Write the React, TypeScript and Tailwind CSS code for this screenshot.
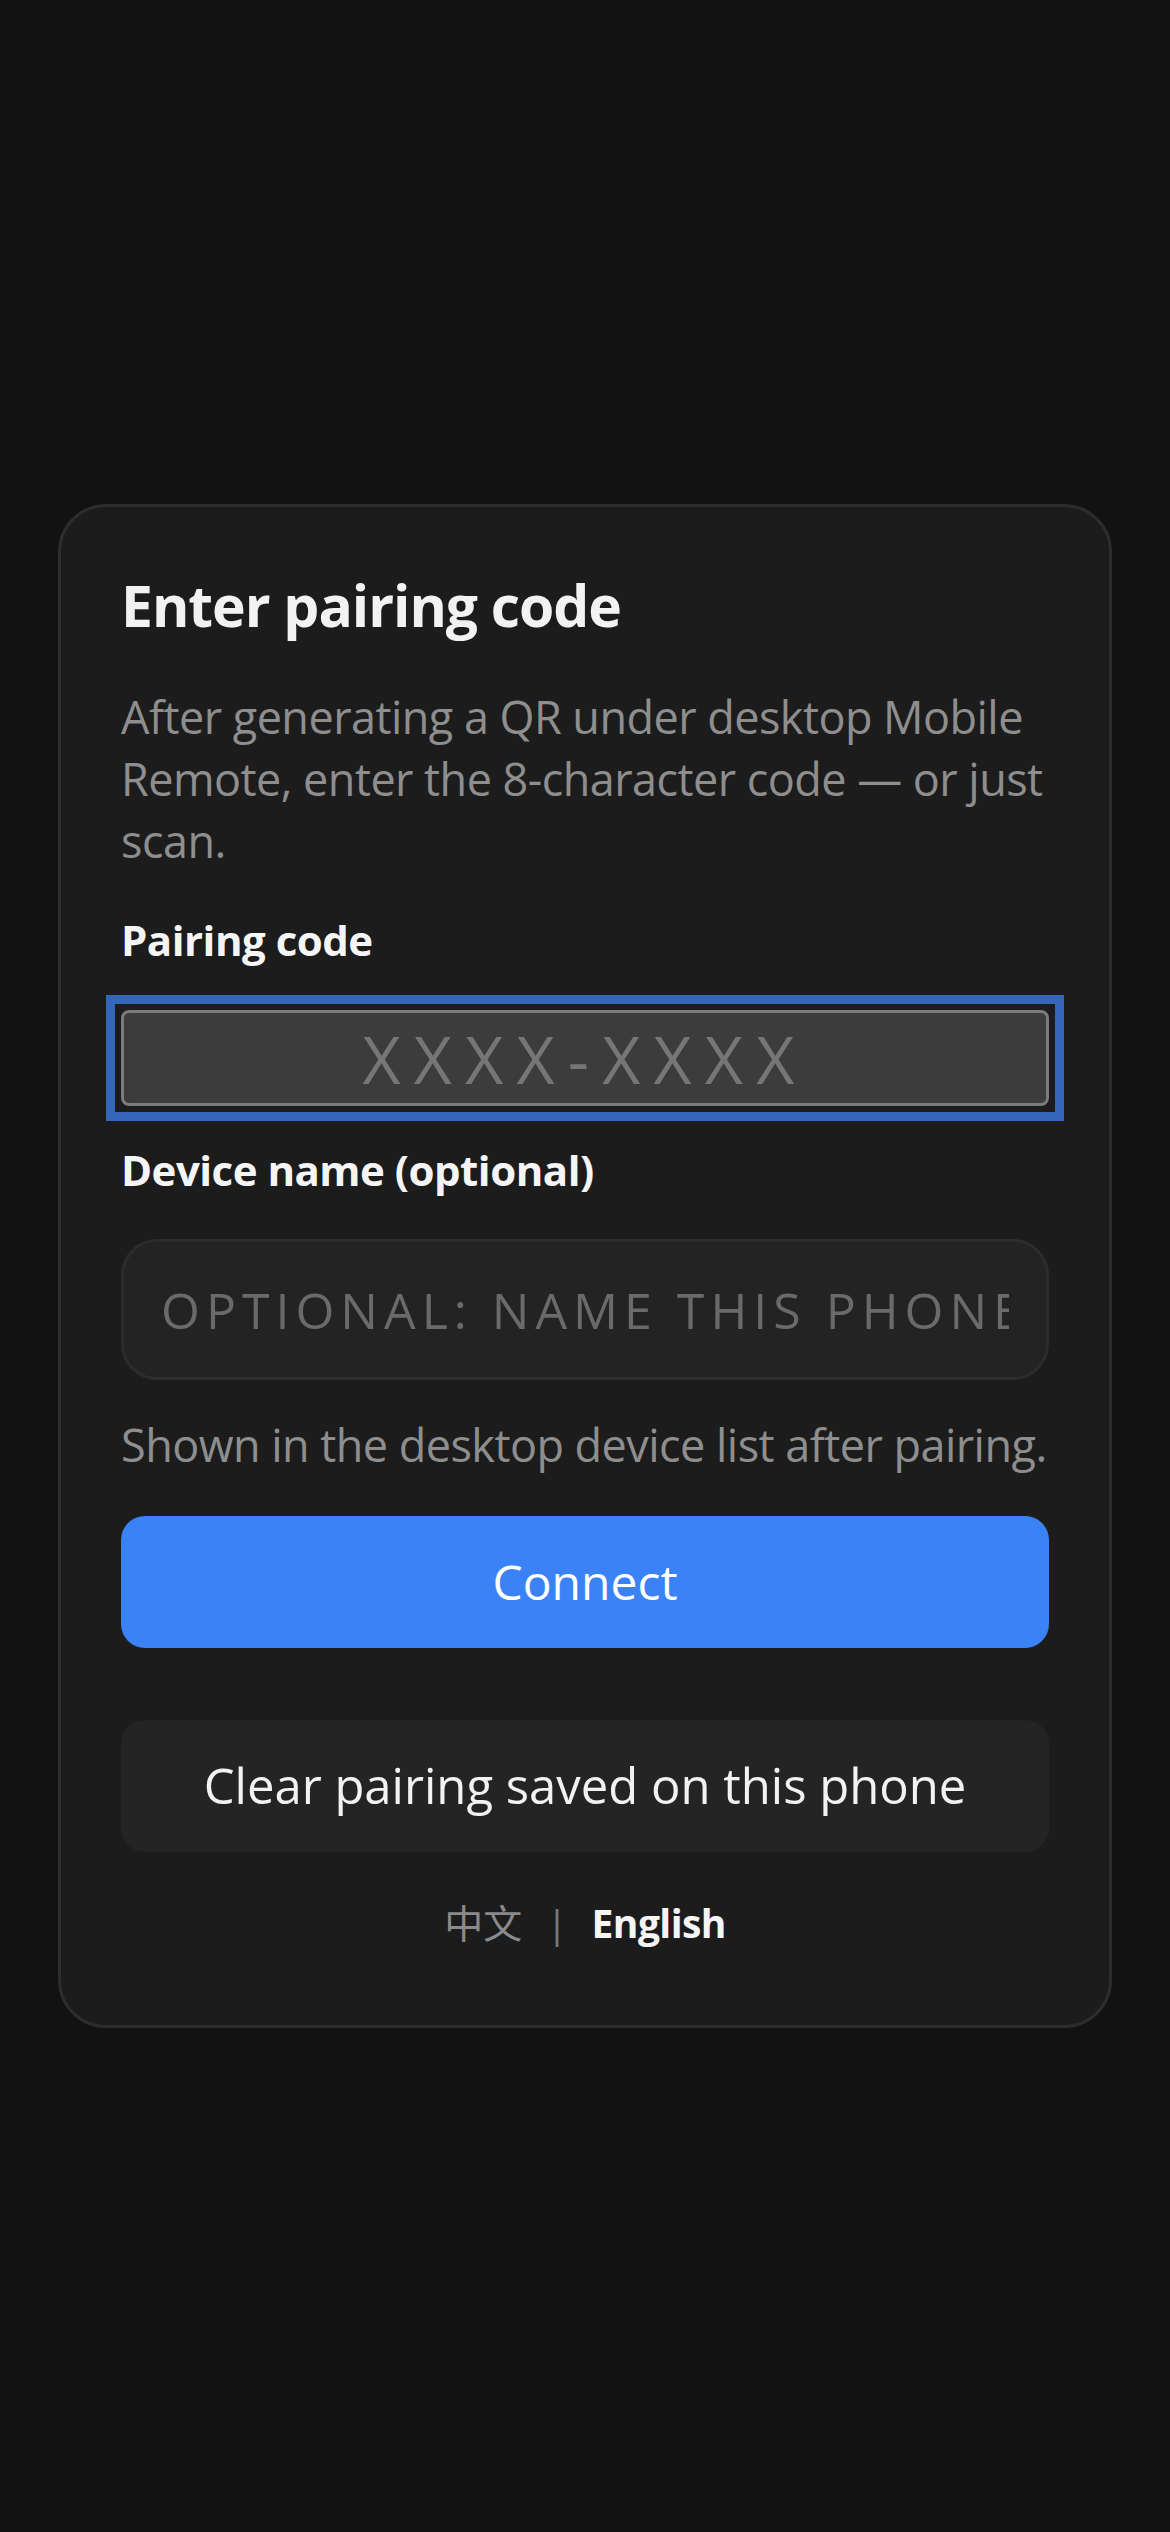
import { useState } from "react"

export default function App() {
  const [code, setCode] = useState("")
  const [name, setName] = useState("")

  return (
    <div
      className="flex min-h-screen items-center bg-[#121212] px-[58px]"
      style={{ fontFamily: '"Open Sans", "Noto Sans CJK SC", sans-serif' }}
    >
      <div className="w-full rounded-[48px] border-[3px] border-[#2d2d2d] bg-[#1c1c1c] px-[60px] pt-[63px] pb-[73px]">
        <h1 className="text-[57px] leading-[71px] font-bold tracking-[-0.018em] text-[#f2f2f2]">Enter pairing code</h1>
        <p className="mt-[45px] text-[45px] leading-[62px] tracking-[-0.012em] text-[#8e8e8e]">
          After generating a QR under desktop Mobile Remote, enter the 8-character code — or just scan.
        </p>

        <label className="mt-[39px] block text-[42px] leading-[58px] font-bold tracking-[-0.012em] text-[#f5f5f5]">
          Pairing code
        </label>
        {/* focus ring: square-cornered, drawn outside the field */}
        <div className="-mx-[15px] mt-[26px] border-[9px] border-[#3466ba] p-[6px]">
          <input
            value={code}
            onChange={(e) => setCode(e.target.value)}
            placeholder="XXXX-XXXX"
            className="block h-[96px] w-full rounded-[8px] border-[3px] border-[#7b7b7b] bg-[#3c3c3c] text-center text-[66px] tracking-[0.2em] text-[#eeeeee] outline-none placeholder:text-[#767676]"
          />
        </div>

        <label className="mt-[20px] block text-[42px] leading-[58px] font-bold tracking-[-0.012em] text-[#f5f5f5]">
          Device name (optional)
        </label>
        <input
          value={name}
          onChange={(e) => setName(e.target.value)}
          placeholder="Optional: name this phone"
          className="mt-[40px] block h-[141px] w-full rounded-[36px] border-[3px] border-[#2c2c2c] bg-[#232323] px-[37px] text-[50px] tracking-[0.12em] uppercase text-[#eeeeee] outline-none placeholder:text-[#6a6a6a]"
        />
        <p className="mt-[34px] text-[45px] leading-[62px] tracking-[-0.012em] text-[#8e8e8e]">
          Shown in the desktop device list after pairing.
        </p>

        <button className="mt-[40px] flex h-[132px] w-full items-center justify-center rounded-[24px] bg-[#3b82f6] text-[48px] text-white">
          Connect
        </button>
        <button className="mt-[72px] flex h-[132px] w-full items-center justify-center rounded-[24px] bg-[#242424] text-[49px] text-[#f2f2f2]">
          Clear pairing saved on this phone
        </button>

        <div className="mt-[42px] flex items-center justify-center text-[39px] leading-[58px]">
          <span className="text-[#8a8a8a]">中文</span>
          <span className="mx-[24px] text-[#7a7a7a]">|</span>
          <span className="font-bold tracking-[-0.015em] text-[#f5f5f5]">English</span>
        </div>
      </div>
    </div>
  )
}
